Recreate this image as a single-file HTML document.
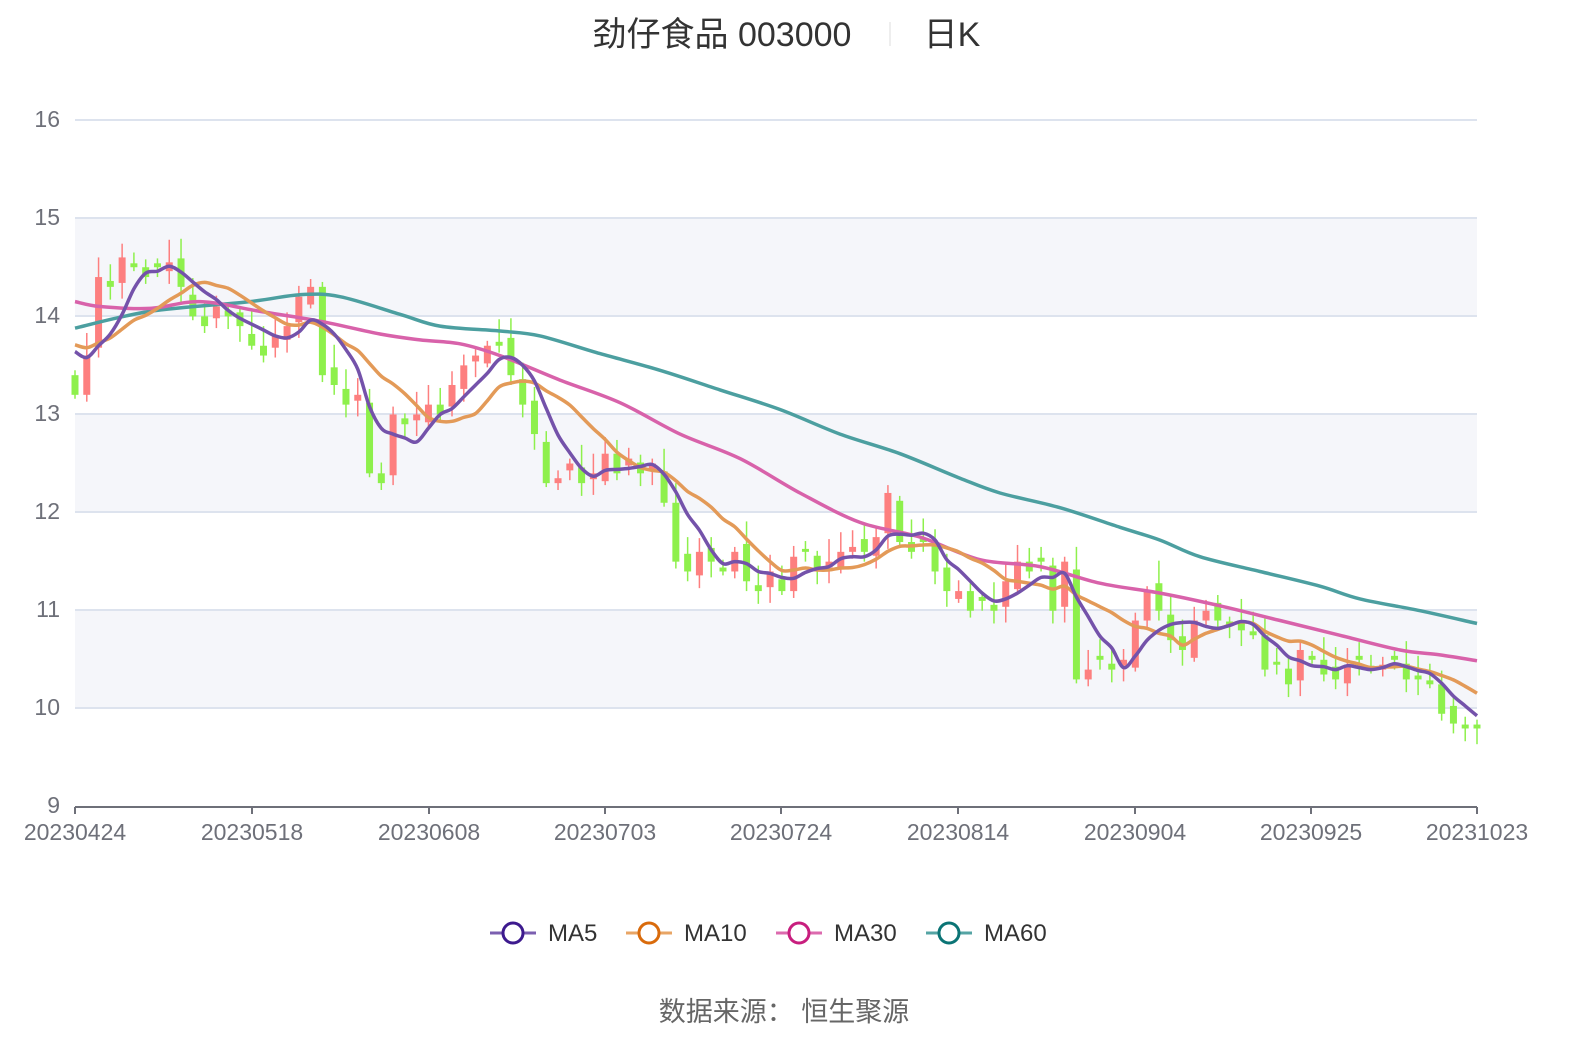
<!DOCTYPE html>
<html><head><meta charset="utf-8"><style>
body{margin:0;background:#fff;width:1574px;height:1034px;overflow:hidden;font-family:"Liberation Sans","Noto Sans CJK SC",sans-serif}
</style></head><body>
<svg id="s" width="1574" height="1034" xmlns="http://www.w3.org/2000/svg" font-family="Liberation Sans, Noto Sans CJK SC, sans-serif">
<text x="722" y="46" font-size="34" fill="#333" text-anchor="middle">劲仔食品 003000</text>
<line x1="890" y1="22" x2="890" y2="46" stroke="#eee" stroke-width="2"/>
<text x="952" y="46" font-size="34" fill="#333" text-anchor="middle">日K</text>
<rect x="75" y="218" width="1402" height="98" fill="#f5f6fa"/>
<rect x="75" y="414" width="1402" height="98" fill="#f5f6fa"/>
<rect x="75" y="610" width="1402" height="98" fill="#f5f6fa"/>
<g stroke="#dde3ee" stroke-width="2">
<line x1="75" y1="120" x2="1477" y2="120"/><line x1="75" y1="218" x2="1477" y2="218"/><line x1="75" y1="316" x2="1477" y2="316"/><line x1="75" y1="414" x2="1477" y2="414"/><line x1="75" y1="512" x2="1477" y2="512"/><line x1="75" y1="610" x2="1477" y2="610"/><line x1="75" y1="708" x2="1477" y2="708"/>
</g>
<line x1="75" y1="807" x2="1477" y2="807" stroke="#6e7079" stroke-width="2"/>
<g font-size="23" fill="#6e7079" text-anchor="end">
<text x="60" y="127">16</text><text x="60" y="225">15</text><text x="60" y="323">14</text><text x="60" y="421">13</text><text x="60" y="519">12</text><text x="60" y="617">11</text><text x="60" y="715">10</text><text x="60" y="813">9</text>
</g>
<g id="ticks" stroke="#6e7079" stroke-width="2"></g>
<g font-size="23" fill="#6e7079" text-anchor="middle">
<text x="75" y="840">20230424</text><text x="252" y="840">20230518</text><text x="429" y="840">20230608</text><text x="605" y="840">20230703</text><text x="781" y="840">20230724</text><text x="958" y="840">20230814</text><text x="1135" y="840">20230904</text><text x="1311" y="840">20230925</text><text x="1477" y="840">20231023</text>
</g>
<g id="candles"></g>
<g id="lines" fill="none" stroke-width="3.5" stroke-linejoin="round"></g>
<g font-size="24" fill="#333">
<line x1="490" y1="933" x2="536" y2="933" stroke="#7b5fb0" stroke-width="3"/><circle cx="513" cy="933" r="10" fill="#fff" stroke="#3d1a8e" stroke-width="3"/><text x="548" y="941">MA5</text>
<line x1="626" y1="933" x2="672" y2="933" stroke="#e8a565" stroke-width="3"/><circle cx="649" cy="933" r="10" fill="#fff" stroke="#d96b0c" stroke-width="3"/><text x="684" y="941">MA10</text>
<line x1="776" y1="933" x2="822" y2="933" stroke="#dc6aae" stroke-width="3"/><circle cx="799" cy="933" r="10" fill="#fff" stroke="#c81e7e" stroke-width="3"/><text x="834" y="941">MA30</text>
<line x1="926" y1="933" x2="972" y2="933" stroke="#55a4a4" stroke-width="3"/><circle cx="949" cy="933" r="10" fill="#fff" stroke="#0b7475" stroke-width="3"/><text x="984" y="941">MA60</text>
</g>
<text x="784" y="1021" font-size="27" fill="#666" text-anchor="middle">数据来源：  恒生聚源</text>
</svg>
<script>
var H=[13.9,13.9,13.8,13.7,13.6,13.9,13.8,13.7,13.6];
var C=[13.2,13.6,14.4,14.3,14.6,14.5,14.4,14.5,14.55,14.3,14.0,13.9,14.1,14.0,13.9,13.7,13.6,13.8,13.9,14.2,14.3,13.4,13.3,13.1,13.2,12.4,12.3,13.0,12.9,13.0,13.1,13.0,13.3,13.5,13.6,13.7,13.7,13.4,13.1,12.8,12.3,12.35,12.5,12.3,12.4,12.6,12.4,12.55,12.4,12.5,12.1,11.5,11.4,11.6,11.5,11.4,11.6,11.3,11.2,11.4,11.2,11.55,11.6,11.4,11.5,11.6,11.65,11.6,11.75,12.2,11.7,11.6,11.7,11.4,11.2,11.2,11.0,11.1,11.0,11.3,11.5,11.4,11.5,11.0,11.5,10.3,10.4,10.5,10.4,10.5,10.9,11.2,11.0,10.7,10.6,10.9,11.0,10.9,10.85,10.8,10.75,10.4,10.45,10.25,10.6,10.5,10.35,10.3,10.45,10.5,10.4,10.45,10.5,10.3,10.3,10.25,9.95,9.85,9.8,9.8];
var n=C.length,A=H.concat(C),off=H.length;
function X(i){return 75+i*1402/(n-1)}function Y(p){return 807-(p-9)*98.14}
var g=document.getElementById("candles"),h="";
for(var i=0;i<n;i++){var c=C[i],o=i?C[i-1]+(((i*7)%5)-2)*0.04:13.4;if(Math.abs(o-c)<0.03)o=c+0.04;
var up=c>=o,col=up?"#fd7f7f":"#8ef04c",hi=Math.max(o,c)+0.05+((i*13)%7)*0.03,lo=Math.min(o,c)-0.04-((i*11)%5)*0.03,x=X(i);
h+='<line x1="'+x+'" x2="'+x+'" y1="'+Y(hi)+'" y2="'+Y(lo)+'" stroke="'+col+'" stroke-width="1.5"/>';
var t=Y(Math.max(o,c)),b=Y(Math.min(o,c));h+='<rect x="'+(x-3.5)+'" y="'+t+'" width="7" height="'+Math.max(b-t,2)+'" fill="'+col+'"/>';}
g.innerHTML=h;
function ma(k){var r=[];for(var i=0;i<n;i++){var s=0,m=0;for(var j=Math.max(0,i+off-k+1);j<=i+off;j++){s+=A[j];m++}r.push([X(i),Y(s/m)])}return r}
function smooth(a){var d="M"+a[0][0].toFixed(1)+","+a[0][1].toFixed(1);for(var i=0;i<a.length-1;i++){var p0=a[Math.max(0,i-1)],p1=a[i],p2=a[i+1],p3=a[Math.min(a.length-1,i+2)];
var c1=[p1[0]+(p2[0]-p0[0])/6,p1[1]+(p2[1]-p0[1])/6],c2=[p2[0]-(p3[0]-p1[0])/6,p2[1]-(p3[1]-p1[1])/6];
d+=" C"+c1[0].toFixed(1)+","+c1[1].toFixed(1)+" "+c2[0].toFixed(1)+","+c2[1].toFixed(1)+" "+p2[0].toFixed(1)+","+p2[1].toFixed(1);}return d}
function hp(a){return a.map(function(p){return [p[0],Y(p[1])]})}
var m30=hp([[75,14.15],[100,14.1],[150,14.08],[200,14.15],[260,14.05],[320,13.95],[380,13.82],[420,13.76],[460,13.72],[500,13.6],[560,13.35],[620,13.12],[680,12.8],[740,12.55],[800,12.2],[860,11.9],[920,11.75],[980,11.52],[1040,11.45],[1100,11.28],[1160,11.18],[1220,11.05],[1280,10.9],[1340,10.75],[1400,10.6],[1440,10.55],[1477,10.49]]);
var m60=hp([[75,13.88],[150,14.05],[250,14.15],[300,14.22],[340,14.2],[400,14.02],[440,13.9],[500,13.85],[540,13.8],[600,13.62],[660,13.45],[720,13.25],[780,13.05],[840,12.8],[900,12.6],[960,12.35],[1000,12.2],[1060,12.05],[1120,11.85],[1160,11.72],[1200,11.55],[1260,11.4],[1320,11.25],[1360,11.12],[1420,11.0],[1477,10.87]]);
document.getElementById("lines").innerHTML=
'<path d="'+smooth(m60)+'" stroke="#4c9fa0"/>'+
'<path d="'+smooth(m30)+'" stroke="#d862aa"/>'+
'<path d="'+smooth(ma(10))+'" stroke="#e39a58"/>'+
'<path d="'+smooth(ma(5))+'" stroke="#7452aa"/>';
var tk="";[75,252,429,605,781,958,1135,1311,1477].forEach(function(x){tk+='<line x1="'+x+'" x2="'+x+'" y1="807" y2="814"/>'});
document.getElementById("ticks").innerHTML=tk;
</script>
</body></html>
